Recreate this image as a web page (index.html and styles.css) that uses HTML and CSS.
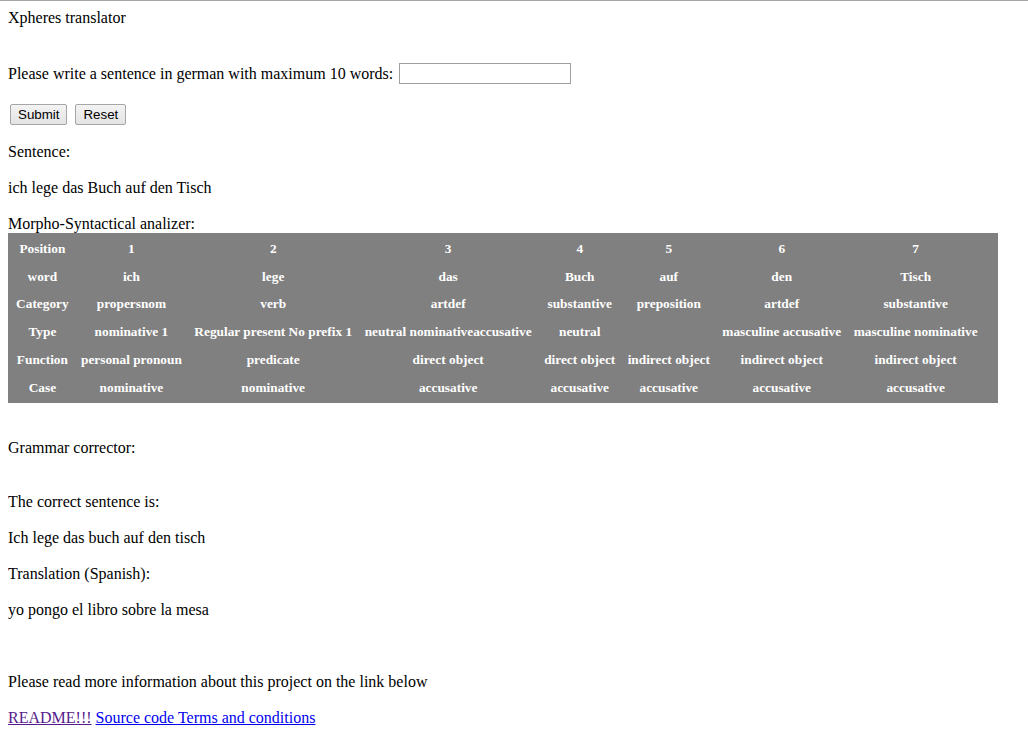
FILE: index.html
```html
<!DOCTYPE html>
<html>
<head>
<meta charset="utf-8">
<title>Xpheres translator</title>
<link rel="stylesheet" href="styles.css">
</head>
<body>
<div class="line title">Xpheres translator</div>
<form class="form">
  <div class="form-row">
    <span>Please write a sentence in german with maximum 10 words:</span>
    <input class="text-input" type="text">
  </div>
  <div class="buttons">
    <button class="btn" type="button">Submit</button>
    <button class="btn" type="button">Reset</button>
  </div>
</form>
<div class="line gap-17">Sentence:</div>
<div class="line">ich lege das Buch auf den Tisch</div>
<div class="line label-tight">Morpho-Syntactical analizer:</div>
<table class="analysis">
  <tr><th>Position</th><th>1</th><th>2</th><th>3</th><th>4</th><th>5</th><th>6</th><th>7</th><th></th></tr>
  <tr><th>word</th><th>ich</th><th>lege</th><th>das</th><th>Buch</th><th>auf</th><th>den</th><th>Tisch</th><th></th></tr>
  <tr><th>Category</th><th>propersnom</th><th>verb</th><th>artdef</th><th>substantive</th><th>preposition</th><th>artdef</th><th>substantive</th><th></th></tr>
  <tr><th>Type</th><th>nominative 1</th><th>Regular present No prefix 1</th><th>neutral nominativeaccusative</th><th>neutral</th><th></th><th>masculine accusative</th><th>masculine nominative</th><th></th></tr>
  <tr><th>Function</th><th>personal pronoun</th><th>predicate</th><th>direct object</th><th>direct object</th><th>indirect object</th><th>indirect object</th><th>indirect object</th><th></th></tr>
  <tr><th>Case</th><th>nominative</th><th>nominative</th><th>accusative</th><th>accusative</th><th>accusative</th><th>accusative</th><th>accusative</th><th></th></tr>
</table>
<div class="line gap-35">Grammar corrector:</div>
<div class="line gap-34">The correct sentence is:</div>
<div class="line">Ich lege das buch auf den tisch</div>
<div class="line">Translation (Spanish):</div>
<div class="line">yo pongo el libro sobre la mesa</div>
<div class="line gap-52">Please read more information about this project on the link below</div>
<div class="line links"><a class="visited" href="#readme">README!!!</a> <a href="#source">Source code </a><a href="#terms">Terms and conditions</a></div>
</body>
</html>
```
FILE: styles.css
```css
html {
  border-top: 1px solid #a3a3a3;
  background: #fff;
}
body {
  margin: 7px 8px 8px 8px;
  font-family: "Liberation Serif", "Times New Roman", serif;
  font-size: 16px;
  color: #000;
}
.line {
  line-height: 20px;
  margin-top: 16px;
}
.title {
  margin-top: 0;
}
.form {
  margin: 0;
}
.form-row {
  margin-top: 35px;
  height: 21px;
  display: flex;
  align-items: center;
  gap: 6px;
  line-height: 20px;
}
.text-input {
  height: 19px;
  margin: 0;
  padding: 0 2px;
  box-sizing: content-box;
  width: 166px;
  border: 1px solid #a0a0a0;
  background: #fff;
  font-family: "Liberation Sans", Arial, sans-serif;
  font-size: 13.33px;
}
.buttons {
  margin-top: 20px;
  height: 21px;
  display: flex;
  align-items: center;
  gap: 8px;
  padding-left: 2px;
}
.btn {
  margin: 0;
  height: 21px;
  padding: 0 7px;
  border: 1px solid #a6a6a6;
  border-radius: 2px;
  background: linear-gradient(#f3f3f3, #e4e4e4);
  color: #000;
  font-family: "Liberation Sans", Arial, sans-serif;
  font-size: 13.33px;
  line-height: 19px;
}
.gap-17 { margin-top: 17px; }
.gap-35 { margin-top: 35px; }
.gap-34 { margin-top: 34px; }
.gap-52 { margin-top: 52px; }
.label-tight {
  line-height: 19px;
}
.analysis {
  width: 990px;
  background: #808080;
  border-collapse: separate;
  border-spacing: 4px;
  margin: 0;
}
.analysis th {
  color: #fff;
  font-family: "Liberation Serif", "Times New Roman", serif;
  font-size: 13.33px;
  font-weight: bold;
  text-align: center;
  padding: 4px;
  line-height: 15.7px;
  white-space: nowrap;
}
a {
  color: #0000ee;
  text-decoration: underline;
}
a.visited {
  color: #551a8b;
}
```
